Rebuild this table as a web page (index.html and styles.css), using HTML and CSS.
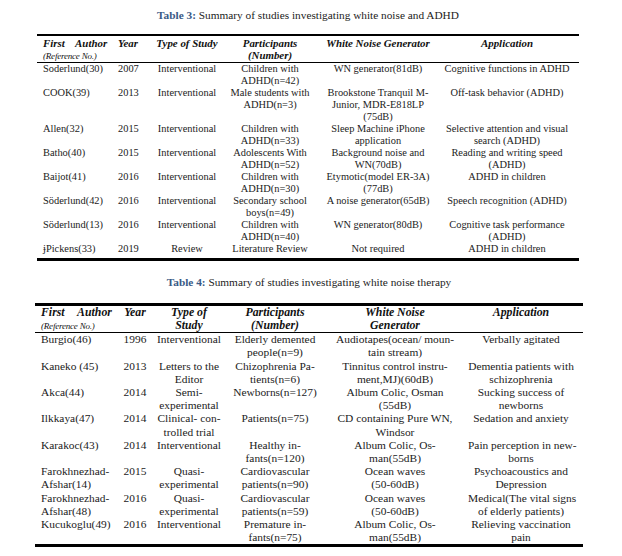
FILE: index.html
```html
<!DOCTYPE html>
<html lang="en">
<head>
<meta charset="UTF-8">
<meta name="viewport" content="width=device-width, initial-scale=1.0">
<title>White noise studies</title>
<link rel="stylesheet" href="styles.css">
</head>
<body>
<div class="page">

  <!-- Tabla 3 -->
  <div class="block block-adhd">
    <p class="caption"><span class="caption-label">Table 3:</span> Summary of studies investigating white noise and ADHD</p>
    <table class="studies studies-adhd">
      <colgroup>
        <col style="width:76px"><col style="width:37px"><col style="width:74px">
        <col style="width:92px"><col style="width:124px"><col style="width:139px">
      </colgroup>
      <thead>
        <tr>
          <th class="author"><span class="first-author">First Author</span><br><span class="ref">(Reference No.)</span></th>
          <th class="year">Year</th>
          <th>Type of Study</th>
          <th>Participants<br>(Number)</th>
          <th>White Noise Generator</th>
          <th class="app">Application</th>
        </tr>
      </thead>
      <tbody>
        <tr>
          <td class="author">Soderlund(30)</td><td class="year">2007</td><td>Interventional</td>
          <td>Children with<br>ADHD(n=42)</td><td>WN generator(81dB)</td><td class="app">Cognitive functions in ADHD</td>
        </tr>
        <tr>
          <td class="author">COOK(39)</td><td class="year">2013</td><td>Interventional</td>
          <td>Male students with<br>ADHD(n=3)</td><td>Brookstone Tranquil M-<br>Junior, MDR-E818LP<br>(75dB)</td><td class="app">Off-task behavior (ADHD)</td>
        </tr>
        <tr>
          <td class="author">Allen(32)</td><td class="year">2015</td><td>Interventional</td>
          <td>Children with<br>ADHD(n=33)</td><td>Sleep Machine iPhone<br>application</td><td class="app">Selective attention and visual<br>search (ADHD)</td>
        </tr>
        <tr>
          <td class="author">Batho(40)</td><td class="year">2015</td><td>Interventional</td>
          <td>Adolescents With<br>ADHD(n=52)</td><td>Background noise and<br>WN(70dB)</td><td class="app">Reading and writing speed<br>(ADHD)</td>
        </tr>
        <tr>
          <td class="author">Baijot(41)</td><td class="year">2016</td><td>Interventional</td>
          <td>Children with<br>ADHD(n=30)</td><td>Etymotic(model ER-3A)<br>(77dB)</td><td class="app">ADHD in children</td>
        </tr>
        <tr>
          <td class="author">Söderlund(42)</td><td class="year">2016</td><td>Interventional</td>
          <td>Secondary school<br>boys(n=49)</td><td>A noise generator(65dB)</td><td class="app">Speech recognition (ADHD)</td>
        </tr>
        <tr>
          <td class="author">Söderlund(13)</td><td class="year">2016</td><td>Interventional</td>
          <td>Children with<br>ADHD(n=40)</td><td>WN generator(80dB)</td><td class="app">Cognitive task performance<br>(ADHD)</td>
        </tr>
        <tr class="last">
          <td class="author">ɉPickens(33)</td><td class="year">2019</td><td>Review</td>
          <td>Literature Review</td><td>Not required</td><td class="app">ADHD in children</td>
        </tr>
      </tbody>
    </table>
  </div>

  <!-- Tabla 4 -->
  <div class="block block-therapy">
    <p class="caption"><span class="caption-label">Table 4:</span> Summary of studies investigating white noise therapy</p>
    <table class="studies studies-therapy">
      <colgroup>
        <col style="width:85px"><col style="width:30px"><col style="width:78px">
        <col style="width:94px"><col style="width:146px"><col style="width:115px">
      </colgroup>
      <thead>
        <tr>
          <th class="author"><span class="first-author">First Author</span><br><span class="ref">(Reference No.)</span></th>
          <th>Year</th>
          <th>Type of<br>Study</th>
          <th>Participants<br>(Number)</th>
          <th>White Noise<br>Generator</th>
          <th class="app">Application</th>
        </tr>
      </thead>
      <tbody>
        <tr>
          <td class="author">Burgio(46)</td><td>1996</td><td>Interventional</td>
          <td>Elderly demented<br>people(n=9)</td><td>Audiotapes(ocean/ moun-<br>tain stream)</td><td class="app">Verbally agitated</td>
        </tr>
        <tr>
          <td class="author">Kaneko (45)</td><td>2013</td><td>Letters to the<br>Editor</td>
          <td>Chizophrenia Pa-<br>tients(n=6)</td><td>Tinnitus control instru-<br>ment,MJ)(60dB)</td><td class="app">Dementia patients with<br>schizophrenia</td>
        </tr>
        <tr>
          <td class="author">Akca(44)</td><td>2014</td><td>Semi-<br>experimental</td>
          <td>Newborns(n=127)</td><td>Album Colic, Osman<br>(55dB)</td><td class="app">Sucking success of<br>newborns</td>
        </tr>
        <tr>
          <td class="author">Ilkkaya(47)</td><td>2014</td><td>Clinical- con-<br>trolled trial</td>
          <td>Patients(n=75)</td><td>CD containing Pure WN,<br>Windsor</td><td class="app">Sedation and anxiety</td>
        </tr>
        <tr>
          <td class="author">Karakoc(43)</td><td>2014</td><td>Interventional</td>
          <td>Healthy in-<br>fants(n=120)</td><td>Album Colic, Os-<br>man(55dB)</td><td class="app">Pain perception in new-<br>borns</td>
        </tr>
        <tr>
          <td class="author">Farokhnezhad-<br>Afshar(14)</td><td>2015</td><td>Quasi-<br>experimental</td>
          <td>Cardiovascular<br>patients(n=90)</td><td>Ocean waves<br>(50-60dB)</td><td class="app">Psychoacoustics and<br>Depression</td>
        </tr>
        <tr>
          <td class="author">Farokhnezhad-<br>Afshar(48)</td><td>2016</td><td>Quasi-<br>experimental</td>
          <td>Cardiovascular<br>patients(n=59)</td><td>Ocean waves<br>(50-60dB)</td><td class="app">Medical(The vital signs<br>of elderly patients)</td>
        </tr>
        <tr class="last">
          <td class="author">Kucukoglu(49)</td><td>2016</td><td>Interventional</td>
          <td>Premature in-<br>fants(n=75)</td><td>Album Colic, Os-<br>man(55dB)</td><td class="app">Relieving vaccination<br>pain</td>
        </tr>
      </tbody>
    </table>
  </div>

</div>
</body>
</html>
```

FILE: styles.css
```css
body {
  margin: 0;
  background-color: #fff;
  color: #222;
  font-family: 'Liberation Serif', 'Times New Roman', serif;
}

.page {
  padding-top: 8px;
}

.block-adhd {
  width: 542px;
  margin-left: 37px;
}

.block-therapy {
  width: 548px;
  margin-left: 35px;
  margin-top: 14px;
}

.caption {
  margin: 0 0 12px;
  text-align: center;
  font-size: 11.3px;
  line-height: 14px;
  white-space: nowrap;
}

.block-therapy .caption {
  margin-bottom: 14px;
}

.caption-label {
  color: #3a5a86;
  font-weight: bold;
}

.studies {
  width: 100%;
  table-layout: fixed;
  border-collapse: collapse;
  border-bottom: 3px solid #000;
}

.studies th,
.studies td {
  padding: 0;
  text-align: center;
  vertical-align: top;
  white-space: nowrap;
}

.studies th {
  font-style: italic;
  font-weight: bold;
  color: #111;
}

.studies thead tr {
  border-bottom: 1px solid #000;
}

.studies .author {
  text-align: left;
  padding-left: 6px;
}

.first-author {
  word-spacing: 8px;
}

.ref {
  font-weight: normal;
  font-size: 9px;
  letter-spacing: -0.2px;
}

/* Tabla 3 */
.studies-adhd {
  border-top: 2px solid #000;
  font-size: 10.4px;
  line-height: 12px;
}

.studies-adhd th {
  font-size: 10.9px;
  padding-top: 1px;
}

.studies-adhd .year {
  text-align: left;
  padding-left: 5px;
}

.studies-adhd .app {
  padding-right: 5px;
}

.studies-adhd .last td {
  padding-bottom: 3px;
}

/* Tabla 4 */
.studies-therapy {
  border-top: 3px solid #000;
  font-size: 11.4px;
  line-height: 13.2px;
}

.studies-therapy th {
  font-size: 11.8px;
  line-height: 12.6px;
}

.studies-therapy .first-author {
  word-spacing: 10px;
}

.studies-therapy .app {
  padding-right: 9px;
}
```
